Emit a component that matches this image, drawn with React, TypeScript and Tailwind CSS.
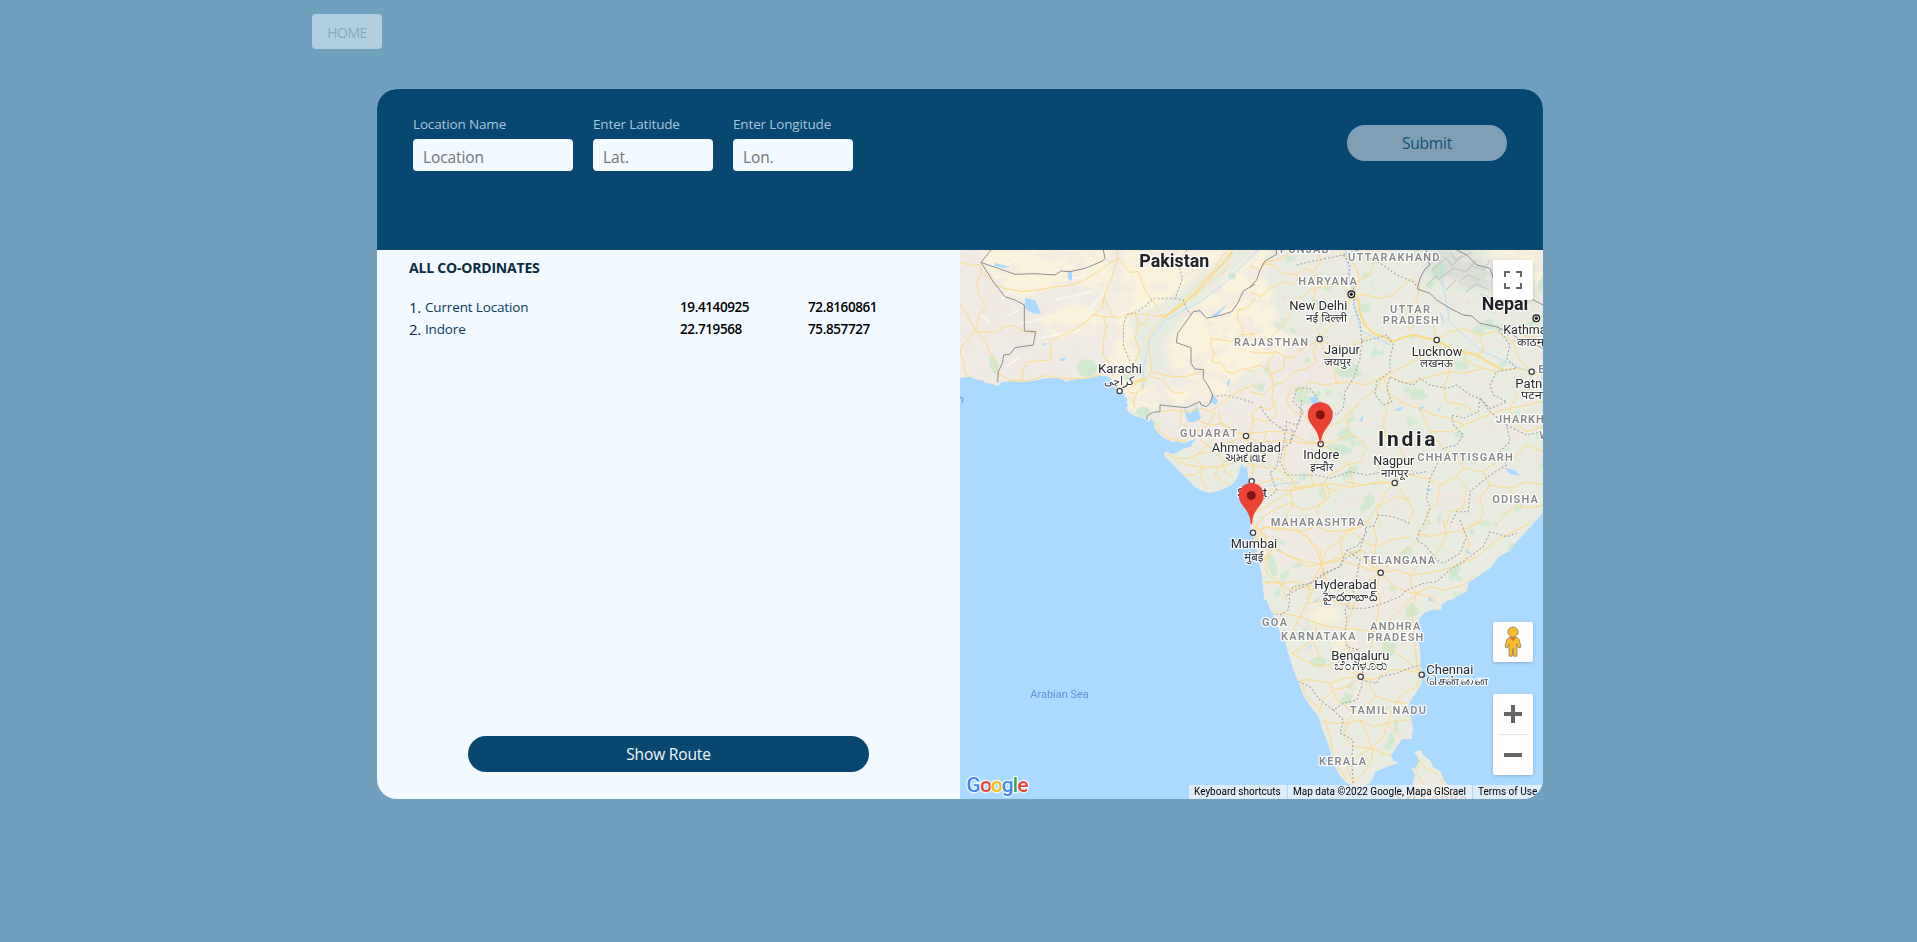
import React from "react";

type Place = {
  x: number;
  w?: number;
  y: number;
  t: string;
  size?: number;
};

const STATES: Place[] = [
  { x: 320, w: 48.5, y: 3, t: "PUNJAB" },
  { x: 388, w: 91.5, y: 11, t: "UTTARAKHAND" },
  { x: 338.3, w: 58.5, y: 34.7, t: "HARYANA" },
  { x: 430, w: 40, y: 62.7, t: "UTTAR" },
  { x: 422.7, w: 56, y: 73.7, t: "PRADESH" },
  { x: 274, w: 74, y: 96, t: "RAJASTHAN" },
  { x: 220, w: 57, y: 187, t: "GUJARAT" },
  { x: 457.3, w: 95.5, y: 210.7, t: "CHHATTISGARH" },
  { x: 536, w: 73, y: 172.7, t: "JHARKHAND" },
  { x: 578.3, w: 34, y: 123, t: "BIHAR" },
  { x: 579.3, w: 32, y: 189.3, t: "WEST" },
  { x: 532.3, w: 45.5, y: 252.7, t: "ODISHA" },
  { x: 310.7, w: 93.5, y: 275.7, t: "MAHARASHTRA" },
  { x: 402.7, w: 72.5, y: 314.3, t: "TELANGANA" },
  { x: 302, w: 25, y: 375.7, t: "GOA" },
  { x: 321, w: 74.5, y: 389.7, t: "KARNATAKA" },
  { x: 410.3, w: 50, y: 379.7, t: "ANDHRA" },
  { x: 407.3, w: 56, y: 390.7, t: "PRADESH" },
  { x: 390, w: 76, y: 463.7, t: "TAMIL NADU" },
  { x: 359, w: 47, y: 514.7, t: "KERALA" },
];

const CITIES: Place[] = [
  { x: 138, w: 44, y: 122.7, t: "Karachi" },
  { x: 251.7, w: 69.3, y: 201.3, t: "Ahmedabad" },
  { x: 329.3, w: 58, y: 60, t: "New Delhi" },
  { x: 543.3, w: 64, y: 83.3, t: "Kathmandu" },
  { x: 364, w: 36, y: 104, t: "Jaipur" },
  { x: 451.7, w: 50.7, y: 105.7, t: "Lucknow" },
  { x: 555.3, w: 34, y: 137.3, t: "Patna" },
  { x: 413.3, w: 41, y: 214.3, t: "Nagpur" },
  { x: 343.3, w: 36, y: 208.7, t: "Indore" },
  { x: 277.3, w: 30, y: 246.3, t: "Surat" },
  { x: 270.7, w: 46.5, y: 297.7, t: "Mumbai" },
  { x: 354.3, w: 62.4, y: 338.7, t: "Hyderabad" },
  { x: 371.3, w: 58, y: 409.7, t: "Bengaluru" },
  { x: 466.3, w: 47, y: 423.7, t: "Chennai" },
];

const LOCAL_NAMES: Place[] = [
  { x: 144, w: 31, y: 134.5, t: "كراچى", size: 12 },
  { x: 265, w: 42, y: 211.5, t: "અમદાવાદ", size: 12 },
  { x: 346, w: 41, y: 71.5, t: "नई दिल्ली" },
  { x: 557, w: 40, y: 96, t: "काठमाडौं" },
  { x: 364, w: 27, y: 115.5, t: "जयपुर" },
  { x: 460, w: 33, y: 116.7, t: "लखनऊ" },
  { x: 561, w: 24, y: 149, t: "पटना" },
  { x: 421, w: 27.5, y: 226.7, t: "नागपूर" },
  { x: 350, w: 23.5, y: 220.7, t: "इन्दौर" },
  { x: 284.3, w: 19, y: 310.7, t: "मुंबई" },
  { x: 363.3, w: 53.5, y: 350.3, t: "హైదరాబాద్", size: 12 },
  { x: 374.3, w: 53.5, y: 420, t: "ಬೆಂಗಳೂರು", size: 13 },
  { x: 466.3, w: 62, y: 434.3, t: "சென்னை", size: 13 },
];

const DOTS: [number, number][] = [
  [159.7, 141],
  [286, 186],
  [359.7, 89],
  [476.7, 90],
  [571.7, 121.7],
  [434.7, 233],
  [360.7, 194],
  [291.7, 231.3],
  [293, 282.7],
  [420.7, 322.7],
  [400.7, 426.7],
  [461.7, 424.7],
];

const CAPITALS: [number, number][] = [
  [391.3, 44.3],
  [576.3, 68.3],
];

const WEST = "translate(-5 -5) scale(0.33333)";
const NORTH = "translate(290 -5) scale(0.33333)";
const CENTRE = "translate(150 150) scale(0.33333)";
const SOUTH = "translate(270 270) scale(0.33333)";

const WEST_LAND =
  "M15 10V398L45 395L60 402L80 405L95 414L112 416L130 424L138 412L165 408L200 411L235 407L270 400L300 398L320 402L335 410L350 404L400 400L430 393L455 392L470 400L465 408L478 415L482 430L495 440L510 445L508 452L518 462L515 472L520 480L515 490L522 503L545 515L565 520L580 531L588 520L597 530L598 550L610 565L630 580L650 590L668 588L685 595L702 588L725 580L712 595L708 606L690 610L662 625L645 627L640 618L628 624L629 636L645 649L661 665L680 685L700 705L715 722L735 735L760 743L790 738L815 728L835 715L848 695L856 665L862 660L868 670L876 664L880 690L905 700V10Z";
const CENTRE_LAND =
  "M380 195L390 208L396 192L404 204L410 196L414 225L418 245L410 262L405 290L415 330L422 370L421 395L426 412L430 405L432 430L440 450L446 480L456 530L463 600H900V0H378Z";
const SOUTH_LAND =
  "M60 0L65 30L72 35L74 70L88 92L90 130L98 170L103 222L118 262L130 285L145 325L166 370L178 410L192 455L206 488L222 530L246 566L266 590L277 628L290 660L304 702L315 742L332 770L350 788L372 800L395 797L420 790L430 770L435 756L470 740L507 728L490 722L483 708L500 682L515 658L545 657L548 620L542 590L534 560L545 538L562 512L575 490L578 455L572 435L571 400L567 370L568 340L564 305L572 288L590 275L613 268L620 272L635 268L634 255L650 244L668 238L712 212L714 188L740 172L780 145L805 112L840 92L862 62L885 38L918 2L945 -20V-120H60Z";
const SRI_LANKA =
  "M552 695L575 690L577 703L602 723L610 742L630 752L642 782L660 800L700 850H550L548 790L556 765L549 752L540 740L556 746L568 722L562 708Z";

const WEST_ROADS =
  "M15 52L50 62L75 58L80 85L105 100L122 120L150 130L200 140L250 135L300 125L350 120L385 108L410 92L440 72L470 50L490 40L485 15M80 85L66 110L70 145L85 170L98 183L75 205L65 235L62 258L40 280L20 305L15 320L25 350L30 385L50 400M15 178L28 195L45 228L62 258L90 262L120 262L150 245L175 240L205 258L240 264M62 258L95 295L105 325L120 345L130 385L122 405M130 385L165 405L220 408L270 392L340 402L400 398L430 390L470 405M200 405L205 370L215 352L250 348L285 345L290 318L285 290L320 270L360 255L400 225L415 210L440 190L445 165L455 130L470 100L480 65L490 40L505 60L525 82L550 80L560 110L575 145L600 175L610 195L620 220L600 250L578 285L585 330L590 380L575 400L520 430M415 210L445 215L500 217L515 208L540 205L550 210L575 205L600 215L640 208L670 180L700 150L740 110L780 70L800 35L820 15M445 215L455 245L445 290L445 330L470 370L475 395M440 190L448 160L465 195L475 215M540 205L550 240L575 238L578 210M550 240L540 280L555 320L540 350M625 220L665 190L700 165L740 135L780 95L810 80L820 50L832 20M590 380L620 388L655 395L690 395L740 380M590 395L625 405L650 440L685 445M570 400L565 430L540 445L520 440M545 445L535 470L540 490M770 280L765 300L780 325L770 350L800 355L815 380L840 385L860 370L900 380M765 280L800 285L830 290L860 270L900 265M845 195L850 230L865 245L860 270M845 195L875 190L900 160M620 500L660 495L700 500L740 490L770 500L800 475L830 450L870 430L900 420M680 500L675 530L700 550L720 560L760 540L780 500M600 530L610 555L640 580L690 590L705 570M725 560L740 590L760 600L735 620L720 640L745 665L735 700L755 735M635 628L665 640L700 640L735 625L780 620L810 600L850 580L872 575M670 650L700 660L745 668L790 665L830 655L850 640M690 690L720 690L740 670M790 665L780 690L800 705L820 720M760 600L800 640L810 680L835 700M872 573L840 560L800 540L790 500M872 573L900 560M872 573L885 610L880 660";

const NORTH_ROADS =
  "M0 60L30 75L50 50L85 45L110 30L130 15M35 55L70 60L100 85L140 90L165 70L190 80L210 50L205 15M190 80L215 110L250 120L285 125L304 148L325 165L330 205L345 240L370 265L400 275L430 290L465 275L490 270L530 280L560 285L600 310L640 320L680 330L720 355L760 375L800 370L845 380M304 148L330 110L320 70L300 45L270 20M304 148L350 150L390 160L430 150L460 120L490 100L510 130L500 170L470 210L480 260M304 148L320 110L360 90L370 60L350 15M304 148L290 190L260 220L235 250L209 282L180 300L150 315L130 340L105 335L80 320L40 325L0 320M0 265L30 285L60 280L100 240L125 200L130 170L165 150L215 110M0 140L30 155L60 130L100 110L130 120L150 90M209 282L200 240L215 200L190 170L195 130L240 120M209 282L190 320L200 350L170 370L130 380L105 410L70 420L65 460L80 510L50 530L20 520L0 540M209 282L240 300L290 310L330 290L365 270M209 282L225 330L250 370L260 415L220 420L180 410L150 440L125 420M105 335L100 370L65 385L30 360L0 370M65 385L70 420L40 450L0 440M80 320L55 350L62 400M260 415L300 410L345 420L400 395L430 400L470 415L520 400L560 390L600 380L640 385L700 370L740 380M400 395L380 430L330 470L300 500L270 530L235 545L215 590M400 395L420 450L410 490L400 540L410 580L440 600L470 640L440 680L434 714M420 450L470 480L510 490L550 510L600 520L640 540L690 520L740 500L780 490L830 480L879 470M560 285L550 240L520 210L480 200L450 170M560 285L600 260L640 250L690 270L740 260L790 290L830 270L879 290M560 285L590 340L600 380L580 430L590 470L640 480L690 510M560 285L530 330L490 350L450 370L400 395M640 320L650 350L700 370M790 290L800 330L845 380L840 430L800 450L780 490L790 530L830 560L879 545M845 380L879 390M690 270L700 320L680 330M215 595L170 590L130 570L95 560L50 560L0 565M215 595L190 540L160 510L130 500L110 470L125 420M215 595L250 590L300 570L330 580L350 610L330 650L290 660L240 690L215 720L160 730L120 735L60 735L0 760M434 714L390 710L340 720L290 710L260 740L215 720M434 714L480 690L530 700L570 720L610 700L640 670L620 630L580 610L540 560L510 490M434 714L400 750L380 800L390 840M434 714L470 760L490 800L470 840M620 690L650 730L640 790L600 800L590 840M640 670L700 680L740 650L790 640L830 600L879 620M700 680L720 720L690 760L700 810L670 840M720 720L780 730L830 710L879 720M780 730L800 780L760 810L740 840M120 735L130 780L110 810L115 840M215 720L230 760L200 790L210 840M50 560L30 620L60 660L110 690L160 730M0 660L60 670M300 570L290 520L330 470M540 560L600 560L640 540M570 720L560 780L530 800L540 840M800 780L840 790L879 780";

const CENTRE_ROADS =
  "M408 108L440 125L480 125L530 120L580 130L632 130M408 108L430 80L425 40L450 20L480 30L500 0M408 108L370 90L340 70L300 75L260 60M408 108L420 150L430 200L425 244L430 290L425 330L430 370L440 390M430 260L470 245L510 235L560 265L610 255L660 250L720 262L790 250L855 248M425 340L470 320L500 300L560 265L540 230L520 190L530 120M430 385L460 350L500 325L540 310L580 330L620 320L660 290L650 255M440 390L480 380L540 390L570 395L620 380L660 395L720 390L750 360M440 380L470 420L500 450L545 470L590 500L635 492L700 470L760 450M460 395L480 440L465 480L470 520L510 550L560 545L600 560L635 492L630 450L600 420L570 395M700 470L690 430L720 390L770 370L800 320L860 290L900 300M720 390L770 430L800 440L840 420L900 410M760 450L780 490L812 518M632 130L620 180L600 220L610 255M632 130L680 160L720 200L730 260M465 545L510 550L530 600M600 560L590 600M635 492L650 540L640 600";

const SOUTH_ROADS =
  "M68 40L80 60L100 20L150 30L180 0M75 60L95 90L110 120L130 80L180 110L230 125L275 135L330 120L390 140L452 158L500 150L540 165L590 160L640 150L700 130L740 110L800 60L860 30L900 10M275 135L260 90L230 50L200 30L180 0M275 135L280 180L250 210L230 250L210 290L190 330L175 370M275 135L290 90L330 60L350 30L400 20M105 190L140 185L180 210L210 200L250 210M130 270L160 280L210 290L260 310L300 320L345 325L400 330L440 340L480 300L520 260L560 220L600 230L625 250M452 158L440 200L450 240L440 300L430 340L420 400L410 440L392 470M452 158L490 200L530 215L560 220L600 200L640 210L700 195L730 170M452 158L430 120L440 60L430 20L410 0M452 158L400 120L370 90L330 120M452 158L500 110L540 80L570 50L560 20M540 165L545 200L560 220M540 165L570 130L620 100L650 50L640 0M560 40L600 50L640 40L700 30L760 0M700 30L720 70L700 130M560 220L545 270L550 330L555 390L560 430L575 464M480 300L490 350L530 350M440 340L470 380L500 400L540 430L570 455M392 470L350 450L310 430L270 440L220 420L185 400M392 470L340 475L300 490L250 480L210 480M392 470L360 500L310 510L280 540L265 580M345 325L350 370L370 420L392 470M260 310L250 360L265 400L270 440M392 470L430 480L480 450L530 450L570 460M392 470L420 500L440 530L400 560L370 580L350 610L310 610L280 600M575 464L560 500L520 520L490 560L470 610L430 620L390 600L350 610M440 530L490 545L530 550M470 610L510 600L545 600M470 610L460 650L430 680L425 720L400 760L370 790M470 610L500 640L515 655M350 610L340 650L370 680L425 685L460 700L485 705M425 685L380 710L350 740L370 790M280 600L300 640L305 690L325 740L350 780M425 685L410 640L390 600M210 480L230 530L270 570M300 490L320 540L350 560L370 580M185 400L220 380L250 360M570 720L580 740L620 760L640 790M570 720L560 760L580 790M345 325L370 260L390 200L452 158M230 250L300 240L370 260";

const BORDERS = {
  west:
    "M108 15L78 52L108 63L130 70L180 88L240 86L300 90L318 78L345 80L390 70L443 48L450 40L445 15M78 52L118 115L150 155L180 165L208 180L208 258L242 260L235 300L180 308L165 328L146 330L142 355L130 380L128 412M900 118L865 138L848 175L830 200L800 210L755 220L735 197L715 200L668 265L664 293L708 308L708 355L720 372L745 374L745 400L758 420L773 450L765 475L755 485L738 480L735 470L695 488L650 484L615 480L615 500L595 502L577 512L575 524",
  north:
    "M0 125L20 105L30 75L45 48L80 28L78 15M528 15L532 45L540 60L525 72L510 100L502 132L540 145L560 165L600 190L640 210L665 213L690 235L740 245L790 270L810 285L840 290L879 310M620 15L650 30L680 60L720 70L730 100L780 120L800 150L850 165L879 180",
};
const STATE_LINES = {
  west: "M695 15L670 60L683 100L660 160L595 160L575 180L550 198L515 210L505 240L505 300L525 350M660 160L685 165L695 195L712 210M773 455L810 450L855 460L900 475",
  north:
    "M140 60L180 50L230 40L280 30L320 15M280 30L300 60L295 100L315 140L310 180L330 230L335 290L375 280L410 270L430 300L420 340L420 380L380 410L375 450L400 480L425 470L410 430L420 395L450 410L490 420L510 400L540 420L590 430L620 420L660 450L690 460L685 500L640 520L605 510L610 540L640 570L620 600L580 610L560 660L540 700L530 760L540 790L520 840M320 15L360 40L400 60L440 90L490 110L505 130M335 290L330 340L310 400L285 440L280 490L260 510L210 470L180 430L140 430L130 470L160 500L140 540L110 530L100 600L90 650L110 690L200 690L240 700L300 680L350 690L400 680L470 690L530 680M740 245L780 300L770 340L800 370L740 380L720 420L730 450L770 470L720 490L690 460M690 460L720 500L770 540L780 590L750 620L770 660L720 690L660 740L655 800L620 800L600 840M770 540L830 570L879 560",
  centre:
    "M450 20L480 60L520 90L550 90L540 130L510 150L500 200L480 220L500 270L480 290L450 300L440 320M540 130L570 60L575 0M900 370L850 350L805 345L790 380L770 380L750 450L700 480L690 500L640 520L600 550L550 560L530 590",
  south:
    "M400 0L410 40L380 80L350 90L330 140L290 160L240 190L180 220L175 270L150 285L130 280M350 90L390 120L380 170L370 220L345 270L350 300L345 350L350 380L385 390L400 430L395 500L380 540L340 550L310 570L340 600L330 640L370 660L365 720L370 800M355 265L410 265L460 250L510 230L530 210L580 190L620 185L660 150L720 110L760 80L780 35L830 50L860 40M395 480L440 490L450 470L500 460L550 440L575 435M205 485L240 500L270 540L310 570M570 30L560 60L590 80L620 120L640 130L690 100L710 50L690 0",
};

const Field = ({
  label,
  placeholder,
  width,
}: {
  label: string;
  placeholder: string;
  width: string;
}) => (
  <label className={`flex flex-col ${width}`}>
    <span className="h-5 text-[13.5px] leading-5 tracking-[-0.15px] text-[#a9c6db]">{label}</span>
    <input
      placeholder={placeholder}
      className="mt-[5px] h-8 w-full rounded bg-[#f2f9ff] px-2.5 pt-1 text-[15.5px] tracking-[-0.1px] text-[#08476f] outline-none placeholder:text-[#757575]"
    />
  </label>
);

const Row = ({ n, name, lat, lon }: { n: number; name: string; lat: string; lon: string }) => (
  <li className="flex h-[22px] items-center text-[13.5px]">
    <span className="w-4 text-[15px] tracking-[-0.4px] text-[#0b2a40]">{n}.</span>
    <span className="w-64 tracking-[-0.15px] text-[#0b3a5b]">{name}</span>
    <span className="-ml-px w-32 font-semibold tracking-[-0.4px] text-black">{lat}</span>
    <span className="font-semibold tracking-[-0.4px] text-black">{lon}</span>
  </li>
);

const Pin = ({ x, y }: { x: number; y: number }) => (
  <g transform={`translate(${x} ${y})`}>
    <path
      d="M0 0C-7 0-12.5 5.4-12.5 12.4C-12.5 17.5-9.8 20.8-7 24.6C-3.6 29.2-1.4 33-.8 39.8C-.7 41.8.7 41.8.8 39.8C1.4 33 3.6 29.2 7 24.6C9.8 20.8 12.5 17.5 12.5 12.4C12.5 5.4 7 0 0 0Z"
      fill="#ea4335"
    />
    <circle cx="0" cy="12.4" r="4.5" fill="#811411" />
  </g>
);

const Blob = ({ x, y, rx, ry, c, r = 0 }: { x: number; y: number; rx: number; ry: number; c: string; r?: number }) => (
  <ellipse cx={x} cy={y} rx={rx} ry={ry} fill={c} transform={`rotate(${r} ${x} ${y})`} />
);

const MapCanvas = () => (
  <svg width="583" height="549" viewBox="0 0 583 549" className="block" fontFamily="Roboto, 'Noto Sans', sans-serif">
    <defs>
      <clipPath id="land">
        <path d={WEST_LAND} transform={WEST} />
        <path d={CENTRE_LAND} transform={CENTRE} />
        <path d={SOUTH_LAND} transform={SOUTH} />
        <path d={SRI_LANKA} transform={SOUTH} />
        <rect x="290" y="0" width="293" height="240" />
      </clipPath>
      <filter id="soft" x="-10%" y="-10%" width="120%" height="120%">
        <feGaussianBlur stdDeviation="3" />
      </filter>
      <filter id="grain" x="0" y="0" width="100%" height="100%" colorInterpolationFilters="sRGB">
        <feTurbulence type="fractalNoise" baseFrequency="0.04 0.07" numOctaves="4" seed="7" />
        <feColorMatrix values="0 0 0 0 0.935  0 0 0 0 0.91  0 0 0 0 0.885  0 0 0 -10 4.9" />
      </filter>
      <filter id="green" x="0" y="0" width="100%" height="100%" colorInterpolationFilters="sRGB">
        <feTurbulence type="fractalNoise" baseFrequency="0.045" numOctaves="3" seed="21" />
        <feColorMatrix values="0 0 0 0 0.82  0 0 0 0 0.91  0 0 0 0 0.81  0 0 0 -16 5" />
      </filter>
    </defs>
    <rect width="583" height="549" fill="#aadaff" />
    <g clipPath="url(#land)">
      <rect width="583" height="549" fill="#e8ebdf" />
      <g filter="url(#soft)">
        <path d="M-10-10H310L300 60L345 95L290 115L262 150L200 160H-10Z" fill="#faf3dc" />
        <path d="M-10 30L30 40L80 60L120 95L150 125L150 150H-10Z" fill="#efebe4" />
        <path d="M-10 -10H20L25 20L70 60L60 100L-10 110Z" fill="#efeae3" />
        <path d="M60 50L110 30L160 50L165 0L150 -5L155 100L140 130L90 100Z" fill="#efebe4" />
        <path d="M78 68L120 52L150 70L130 84L95 88Z" fill="#faf3dc" />
        <path d="M170 65L200 55L245 20L280-5L300 0L230 60L205 95L215 130L180 140L175 95Z" fill="#e6ebe0" />
        <path d="M190 120L240 130L262 150L300 120L330 95L350 120L340 180L300 210L290 280L330 300L300 200L210 200Z" fill="#efeae3" />
        <path d="M205 140L240 135L255 148L215 156Z" fill="#faf3dc" />
        <path d="M225 200L275 195L285 225L250 245L225 220Z" fill="#e8ebdf" />
        <Blob x={365} y={112} rx={42} ry={22} c="#efe8e2" />
        <Blob x={340} y={185} rx={30} ry={40} c="#efe9e2" />
        <Blob x={345} y={300} rx={34} ry={26} c="#eeeae1" />
        <Blob x={418} y={335} rx={42} ry={28} c="#efe9e3" />
        <Blob x={385} y={445} rx={20} ry={28} c="#eeebe0" />
        <Blob x={365} y={365} rx={16} ry={10} c="#f7f1da" />
        <Blob x={385} y={395} rx={12} ry={10} c="#f7f0d8" />
        <Blob x={293} y={72} rx={24} ry={48} c="#faf3dc" />
        <path d="M455-5H600V75L540 62L500 48L460 35Z" fill="#e3ebdd" />
        <path d="M520-5H600V42L565 28Z" fill="#faf3dc" />
        <path d="M468-2L510 0L530 20L550 38L505 38L465 22Z" fill="#dcdfd8" />
        <Blob x={440} y={90} rx={70} ry={40} c="#e8ece0" />
      </g>
      <rect x="290" width="293" height="549" filter="url(#grain)" opacity="0.7" />
      <rect width="290" height="290" filter="url(#grain)" opacity="0.6" />
      <rect x="290" width="293" height="549" filter="url(#green)" opacity="0.9" />
      <g>
        <Blob x={127} y={118} rx={10} ry={9} c="#d0e8cf" />
        <Blob x={34} y={115} rx={4} ry={10} c="#d2e8d0" r={-15} />
        <Blob x={183} y={162} rx={7} ry={5} c="#d0e8cf" />
        <Blob x={168} y={126} rx={6} ry={5} c="#dcebd4" />
        <Blob x={272} y={26} rx={4} ry={3} c="#d0e8cf" />
        <Blob x={387} y={120} rx={12} ry={8} c="#d2e8d0" />
        <Blob x={379} y={199} rx={13} ry={5} c="#d0e8cf" r={10} />
        <Blob x={390} y={222} rx={10} ry={4} c="#d0e8cf" r={-35} />
        <Blob x={479} y={21} rx={7} ry={8} c="#c9e4cb" />
        <Blob x={312} y={315} rx={4} ry={12} c="#d2e8d0" r={-15} />
        <Blob x={429} y={398} rx={7} ry={8} c="#d2e8d0" />
        <Blob x={358} y={412} rx={8} ry={5} c="#d2e8d0" />
        <Blob x={345} y={150} rx={9} ry={4} c="#d2e8d0" />
        <Blob x={495} y={322} rx={4} ry={10} c="#d2e8d0" r={30} />
      </g>
      <g stroke="#c2c6c1" strokeWidth="1.2" fill="none" opacity="0.8">
        <path d="M472 20L486 8L492 16L502 5M478 30L494 18L506 22L516 10M498 32L508 25L520 30M506 42L516 34L530 40M480 12L474 4M490 2L496 10L512 2M512 16L524 20L530 10M520 44L536 50L542 42M466 36L476 26L484 36M486 40L496 30" />
      </g>
      <g stroke="#fbf8f0" strokeWidth="1.8" fill="none" opacity="0.8" strokeLinecap="round">
        <path d="M42 50L52 38M60 74L92 66M20 64L30 72M80 88L120 80M104 30L124 26M95 50L130 42M48 66L58 60M46 116L60 108M130 60L145 40M48 14L56 10" />
      </g>
      <g fill="#aadaff">
        <path d="M65 48L75 50L81 64L72 63L65 58Z" />
        <path d="M108 22H112V31L108 29ZM35 13L50 17L44 18L34 16ZM98 110L106 107L104 111ZM82 94L86 93L85 96Z" />
        <path d="M224 158L230 164L237 156L241 168L235 172L228 172L226 166Z" />
        <path d="M252 145L258 150L256 155L251 152ZM267 132L271 128L268 138ZM268 54L252 66L256 67Z" />
        <path d="M350 148L356 146L359 152L353 158ZM545 218L555 220L560 226L550 224ZM573 274L583 262V278ZM479 60L483 68L484 76ZM458 158L465 156L460 162ZM466 238L474 240L468 241ZM434 160L444 156L440 161ZM477 160L481 157L480 161ZM336 382L344 385L338 388ZM345 465L352 468L347 472Z" />
        <path d="M352 352L360 348L357 352ZM470 346L474 352L468 350ZM399 170L404 164L402 172ZM318 298L322 302L317 301ZM437 228L440 233L436 232ZM505 298L512 304L506 303Z" />
      </g>
      <g fill="none" stroke="#b7dffb" strokeWidth="1">
        <path d="M300 -2L268 30L240 52L205 70L190 90L184 115L182 140M385 0L392 40L400 80L430 95M480 10L484 40L490 72L520 100L560 118L583 124M345 400L352 395M296 240L310 235L340 232" />
      </g>
      <g fill="none" stroke="#fcda88" strokeWidth="3" strokeLinejoin="round">
        <path d={WEST_ROADS} transform={WEST} />
        <path d={NORTH_ROADS} transform={NORTH} />
        <path d={CENTRE_ROADS} transform={CENTRE} />
        <path d={SOUTH_ROADS} transform={SOUTH} />
      </g>
      <g fill="none" stroke="#fbd873" strokeWidth="5.5" strokeLinejoin="round" opacity="0.85">
        <path d="M304 148L325 165L330 205L345 240L370 265L400 275L430 290L465 275L490 270L530 280L560 285L600 310L640 320L680 330L720 355L760 375" transform={NORTH} />
        <path d="M832 18L800 60L760 100L720 145L680 180L625 220M500 425L570 400" transform={WEST} />
      </g>
      <g fill="none" stroke="#8b8f92" strokeWidth="3">
        <path d={BORDERS.west} transform={WEST} />
        <path d={BORDERS.north} transform={NORTH} />
      </g>
      <g fill="none" stroke="#a3a6a6" strokeWidth="3.2" strokeDasharray="6 6">
        <path d={STATE_LINES.west} transform={WEST} />
        <path d={STATE_LINES.north} transform={NORTH} />
        <path d={STATE_LINES.centre} transform={CENTRE} />
        <path d={STATE_LINES.south} transform={SOUTH} />
      </g>
    </g>

    <g stroke="#ffffff" strokeOpacity="0.85" strokeWidth="2.6" strokeLinejoin="round" style={{ paintOrder: "stroke" }}>
      <g fontSize="11" fontWeight="600" fill="#88888b">
        {STATES.map((s, i) => (
          <text key={i} x={s.x} y={s.y} textLength={s.w}>
            {s.t}
          </text>
        ))}
      </g>
      <text x="435" y="555" fontSize="17" fontWeight="700" fill="#8a8a8d" textLength="73">
        Sri Lanka
      </text>
      <g fontSize="13.2" fill="#26282b">
        {CITIES.map((s) => (
          <text key={s.t} x={s.x} y={s.y + 0.3} textLength={s.w} lengthAdjust="spacingAndGlyphs">
            {s.t}
          </text>
        ))}
      </g>
      <g fill="#333538">
        {LOCAL_NAMES.map((s) => (
          <text
            key={s.t}
            x={s.x}
            y={s.y + 0.4}
            fontSize={s.size ?? 11.5}
            textLength={s.w}
            lengthAdjust="spacingAndGlyphs"
          >
            {s.t}
          </text>
        ))}
      </g>
      <g fontWeight="700" fill="#212326">
        <text x="179.3" y="16.5" fontSize="18" textLength="70" lengthAdjust="spacingAndGlyphs">
          Pakistan
        </text>
        <text x="521.7" y="60" fontSize="18" textLength="46.5" lengthAdjust="spacingAndGlyphs">
          Nepal
        </text>
        <text x="418" y="196" fontSize="21" textLength="57.5">
          India
        </text>
      </g>
    </g>
    <text x="70.3" y="448.3" fontSize="11" fill="#5f93d8" textLength="58.5">
      Arabian Sea
    </text>
    <text x="-1.5" y="153" fontSize="10" fontStyle="italic" fill="#5f93d8">
      n
    </text>
    <g fill="#fff" stroke="#3c3e40" strokeWidth="1.3">
      {DOTS.map(([x, y], i) => (
        <circle key={i} cx={x} cy={y} r="2.6" />
      ))}
    </g>
    {CAPITALS.map(([x, y], i) => (
      <g key={i}>
        <circle cx={x} cy={y} r="3.3" fill="#fff" stroke="#222" strokeWidth="1.3" />
        <circle cx={x} cy={y} r="1.7" fill="#222" />
      </g>
    ))}
    <Pin x={360.3} y={152.3} />
    <Pin x={291.3} y={233} />
    <text
      x="6.5"
      y="541.7"
      fontSize="21"
      fontWeight="500"
      textLength="62"
      stroke="#fff"
      strokeOpacity="0.75"
      strokeWidth="2.6"
      strokeLinejoin="round"
      style={{ paintOrder: "stroke" }}
    >
      <tspan fill="#4285f4">G</tspan>
      <tspan fill="#ea4335">o</tspan>
      <tspan fill="#fbbc04">o</tspan>
      <tspan fill="#4285f4">g</tspan>
      <tspan fill="#34a853">l</tspan>
      <tspan fill="#ea4335">e</tspan>
    </text>
  </svg>
);

const Pegman = () => (
  <svg width="18" height="32" viewBox="0 0 18 32">
    <path
      d="M5 11.5H13L15.2 13.5L17 21L14.6 22L12.9 18V30.2H9.8L9 22.5L8.2 30.2H5.1V18L3.4 22L1 21L2.8 13.5Z"
      fill="#fbbc2c"
      stroke="#8d7a55"
      strokeWidth="0.8"
      strokeLinejoin="round"
    />
    <path d="M5.8 11.4H12.2L9 15.6Z" fill="#e27b2b" />
    <circle cx="9" cy="6" r="5.1" fill="#fbbc2c" stroke="#8d7a55" strokeWidth="0.8" />
  </svg>
);

const control = "w-10 rounded-[2px] bg-white shadow-[0_1px_4px_-1px_rgba(0,0,0,0.3)]";

const MapPanel = () => (
  <section className="relative h-[549px] w-[583px] overflow-hidden">
    <MapCanvas />
    <div className="absolute right-2.5 top-2.5">
      <button className={`${control} flex h-10 items-center justify-center`} aria-label="Fullscreen">
        <svg width="18" height="18" viewBox="0 0 18 18" fill="#666">
          <path d="M0 0V6H2V2H6V0ZM16 0H12V2H16V6H18V0ZM16 16H12V18H18V12H16ZM2 12H0V18H6V16H2Z" />
        </svg>
      </button>
    </div>
    <div className="absolute bottom-6 right-2.5 flex flex-col gap-8">
      <button className={`${control} flex h-10 items-center justify-center`} aria-label="Street view">
        <Pegman />
      </button>
      <div className={`${control} flex h-[81px] flex-col items-center`}>
        <button className="flex h-10 w-10 items-center justify-center" aria-label="Zoom in">
          <svg width="18" height="18" viewBox="0 0 18 18" fill="#666">
            <path d="M7 0H11V7H18V11H11V18H7V11H0V7H7Z" />
          </svg>
        </button>
        <div className="h-px w-[30px] bg-[#e6e6e6]" />
        <button className="flex h-10 w-10 items-center justify-center" aria-label="Zoom out">
          <svg width="18" height="18" viewBox="0 0 18 18" fill="#666">
            <path d="M0 7H18V11H0Z" />
          </svg>
        </button>
      </div>
    </div>
    <div className="absolute bottom-0 right-0 flex h-3.5 w-[354px] gap-px whitespace-nowrap font-[Roboto,sans-serif] text-[10px] leading-[14px] text-black">
      <span className="w-[98px] bg-[#f5f5f5]/70 pl-[5px]">Keyboard shortcuts</span>
      <span className="w-[184px] bg-[#f5f5f5]/70 pl-[5px]">Map data ©2022 Google, Mapa GISrael</span>
      <span className="flex-1 bg-[#f5f5f5]/70 pl-[5px]">Terms of Use</span>
    </div>
  </section>
);

export default function App() {
  return (
    <div className="h-[942px] w-full overflow-hidden bg-[#719fbe] font-['Open_Sans','Noto_Sans',sans-serif]">
      <nav className="flex h-[89px] pl-[312px] pt-3.5">
        <button className="h-[35px] w-[70px] rounded bg-[#b1cde0] pt-0.5 text-[14px] tracking-[-0.5px] text-[#85a7be]">
          HOME
        </button>
      </nav>
      <main className="ml-[377px] w-[1166px] overflow-hidden rounded-[20px] bg-[#f2f9ff]">
        <header className="flex h-[161px] items-start bg-[#08476f] pl-9 pr-9 pt-[25px]">
          <div className="flex gap-5">
            <Field label="Location Name" placeholder="Location" width="w-40" />
            <Field label="Enter Latitude" placeholder="Lat." width="w-[120px]" />
            <Field label="Enter Longitude" placeholder="Lon." width="w-[120px]" />
          </div>
          <button className="ml-auto mt-[11px] h-9 w-40 rounded-[18px] bg-[#809fb5] pt-0.5 text-[15.5px] tracking-[-0.2px] text-[#0f5079]">
            Submit
          </button>
        </header>
        <div className="flex h-[549px]">
          <section className="flex w-[583px] flex-col pb-[27px] pl-8">
            <h2 className="mt-[7px] text-[14px] font-bold leading-[22px] tracking-[-0.2px] text-[#0b2a40]">
              ALL CO-ORDINATES
            </h2>
            <ol className="mt-[17px]">
              <Row n={1} name="Current Location" lat="19.4140925" lon="72.8160861" />
              <Row n={2} name="Indore" lat="22.719568" lon="75.857727" />
            </ol>
            <button className="ml-[59px] mt-auto h-9 w-[401px] rounded-[18px] bg-[#08476f] pt-0.5 text-[15.5px] tracking-[-0.15px] text-[#f1f8ff]">
              Show Route
            </button>
          </section>
          <MapPanel />
        </div>
      </main>
    </div>
  );
}
